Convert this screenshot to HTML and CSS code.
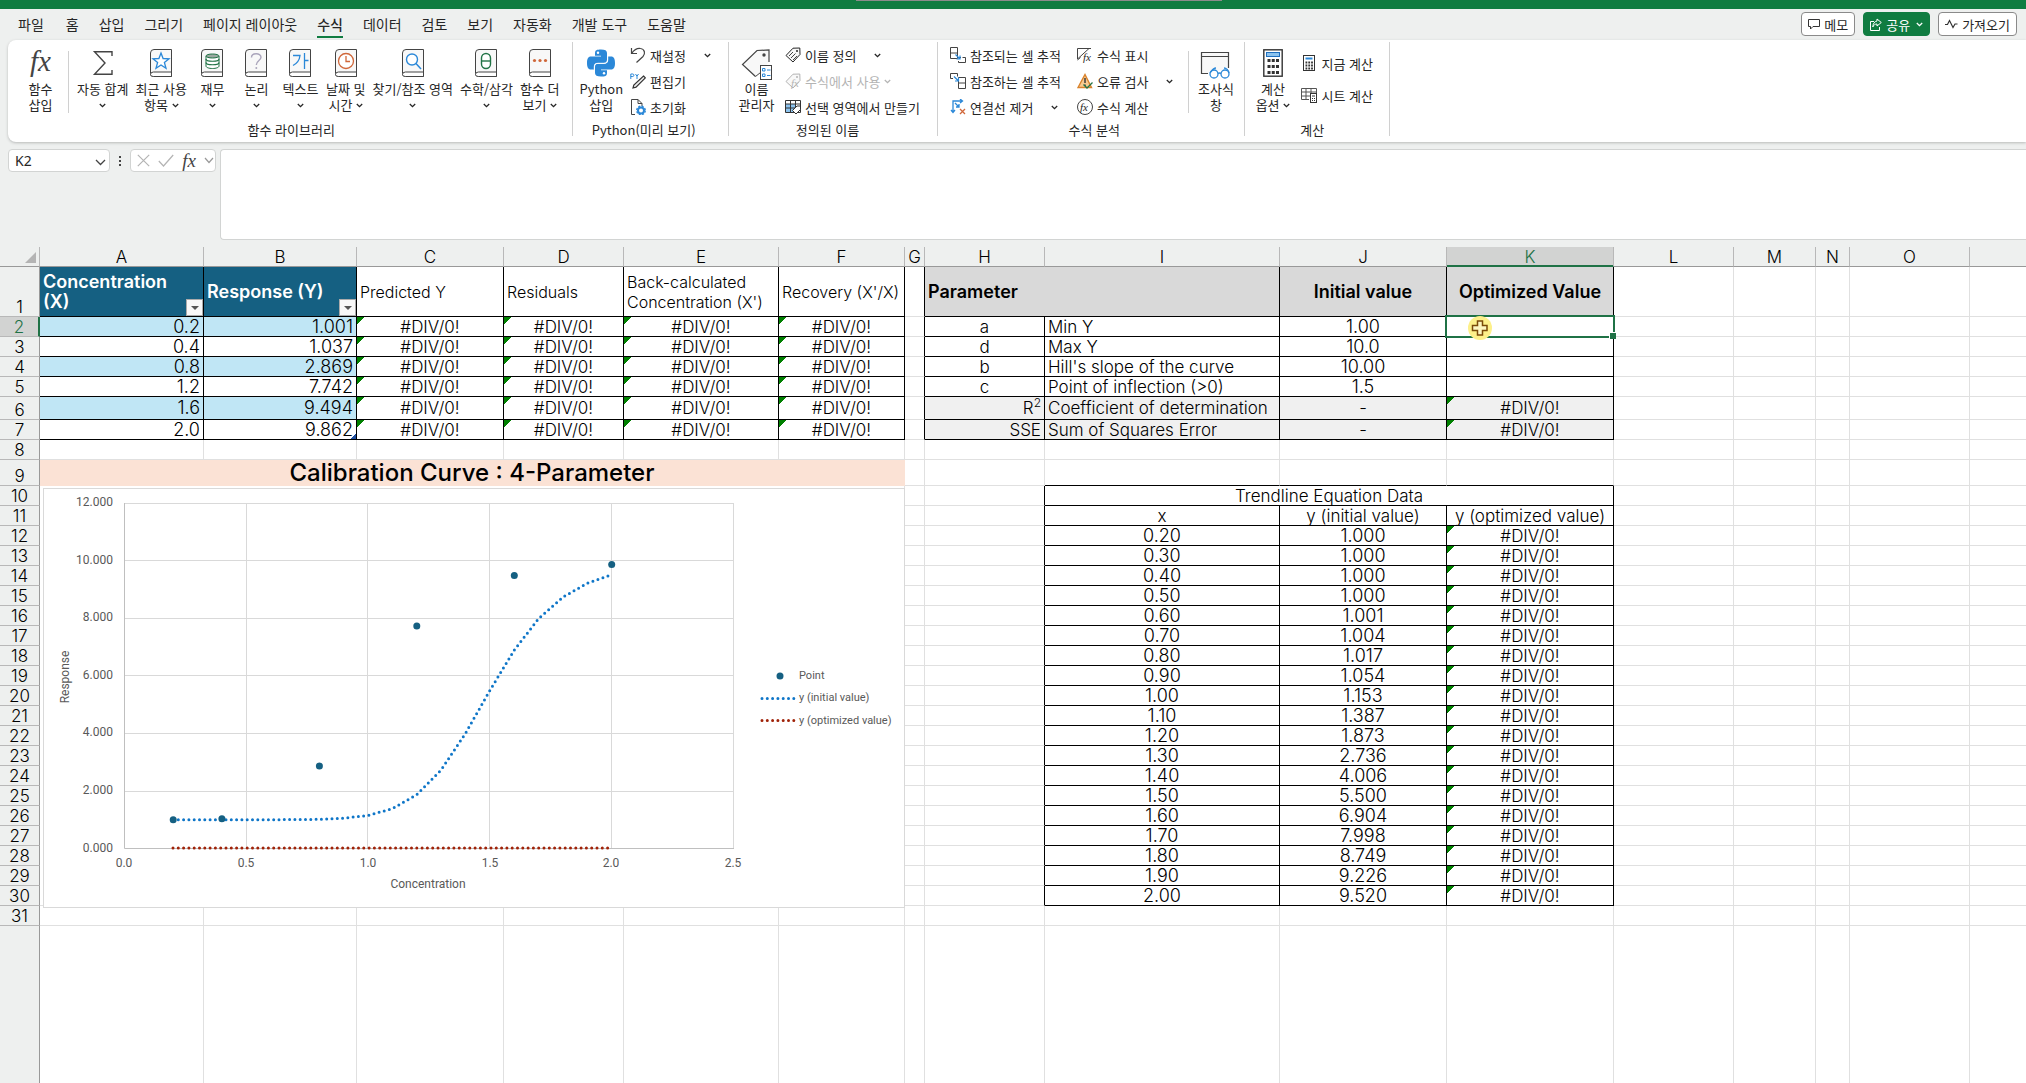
FILE: index.html
```html
<!DOCTYPE html>
<html lang="ko">
<head>
<meta charset="utf-8">
<title>Calibration Curve</title>
<link rel="stylesheet" href="styles.css">
</head>
<body>
<svg class="defs" aria-hidden="true">
  <symbol id="chev" viewBox="0 0 7 5"><path d="M.8 1l2.7 2.7L6.200 1" fill="none" stroke="currentColor" stroke-width="1.300"/></symbol>
  <symbol id="book" viewBox="0 0 22 28"><path d="M4 .5H21.500V27.500H3.500a3 3 0 0 1-3-3V4A3.500 3.500 0 0 1 4 .5z" fill="#f8f8f8" stroke="#444"/><path d="M.5 25.500a3 2.500 0 0 1 3-2.500H21.500V27.500H3.500a3 2 0 0 1-3-2z" fill="#fff" stroke="#444"/></symbol>
  <symbol id="tag" viewBox="0 0 16 16"><path d="M1 8.500L8 1.200 14.800 1 15 7.500 8 15z" fill="#f8f8f8" stroke="currentColor"/><circle cx="12" cy="4" r="1" fill="currentColor"/></symbol>
</svg>

<div class="titlebar"><div class="titlebar-handle"></div></div>

<header class="tabs">
  <nav class="tab-list">
    <a href="#">파일</a><a href="#" class="second">홈</a><a href="#">삽입</a><a href="#">그리기</a><a href="#">페이지 레이아웃</a><a href="#" class="active">수식</a><a href="#">데이터</a><a href="#">검토</a><a href="#">보기</a><a href="#">자동화</a><a href="#">개발 도구</a><a href="#">도움말</a>
  </nav>
  <div class="actions">
    <button type="button"><svg width="12" height="12" viewBox="0 0 12 12"><path d="M.5 1.500h11v7H5L2.500 11V8.500h-2z" fill="none" stroke="#333"/></svg>메모</button>
    <button type="button" class="share"><svg width="12" height="13" viewBox="0 0 12 13"><path d="M4 3.500H.5v9h9V9M7 1l4.300 3.500L7 8V6C5 6 3.500 7 2.800 9 3 5.500 4.500 3.500 7 3z" fill="none" stroke="#fff"/></svg>공유<svg class="chev" width="7" height="5"><use href="#chev"/></svg></button>
    <button type="button"><svg width="13" height="10" viewBox="0 0 13 10"><path d="M0 5.500h2.500L4.500 1.500 8 8.500 10 5h2.500" fill="none" stroke="#333" stroke-width="1.200"/></svg>가져오기</button>
  </div>
</header>

<section class="ribbon">
  <div class="group g-lib">
    <div class="body">
      <button type="button" class="big"><span class="ico fx">fx</span><span>함수<br>삽입</span></button>
      <i class="sep"></i>
      <button type="button" class="big"><span class="ico"><svg width="20" height="28" viewBox="0 0 20 28"><path d="M19 7V2.700H1.500L12 14 1.500 25.300H19V21" fill="none" stroke="#444" stroke-width="1.400"/></svg></span><span>자동 합계<br><svg class="chev" width="7" height="5"><use href="#chev"/></svg></span></button>
      <button type="button" class="big"><span class="ico"><svg width="22" height="28"><use href="#book"/><path d="M11 4l2.100 5.500 5.900.3-4.600 3.700 1.600 5.800-5-3.300-5 3.300 1.600-5.800L3 9.800l5.900-.3z" fill="#fff" stroke="#2b88d8" stroke-width="1.300"/></svg></span><span>최근 사용<br>항목 <svg class="chev" width="7" height="5"><use href="#chev"/></svg></span></button>
      <button type="button" class="big"><span class="ico"><svg width="22" height="28"><use href="#book"/><path d="M5 7v10c0 1.500 3 2.500 6.500 2.500S18 18.500 18 17V7" fill="#fff" stroke="#217346"/><ellipse cx="11.500" cy="7" rx="6.500" ry="2" fill="#9aa8a0" stroke="#217346"/><path d="M5 10c0 3 13 3 13 0M5 13.500c0 3 13 3 13 0" fill="none" stroke="#217346" stroke-width="1.200"/></svg></span><span>재무<br><svg class="chev" width="7" height="5"><use href="#chev"/></svg></span></button>
      <button type="button" class="big"><span class="ico"><svg width="22" height="28"><use href="#book"/><path d="M6.500 8.500c0-5 9.500-5 9.500-.3 0 3.300-4.700 3.300-4.700 7.800" fill="none" stroke="#aaa5bb" stroke-width="1.400"/><circle cx="11.300" cy="19" r="1" fill="#aaa5bb"/></svg></span><span>논리<br><svg class="chev" width="7" height="5"><use href="#chev"/></svg></span></button>
      <button type="button" class="big"><span class="ico"><svg width="22" height="28"><use href="#book"/><path d="M4 6.500h7C10.500 11 8 14.500 4 16.500M15.500 4v16M15.500 11.500h4" fill="none" stroke="#2b88d8" stroke-width="1.300"/></svg></span><span>텍스트<br><svg class="chev" width="7" height="5"><use href="#chev"/></svg></span></button>
      <button type="button" class="big"><span class="ico"><svg width="22" height="28"><use href="#book"/><circle cx="11" cy="12" r="7.500" fill="#fff" stroke="#d0673a" stroke-width="1.300"/><path d="M11 7v5.500h4" fill="none" stroke="#d0673a" stroke-width="1.300"/></svg></span><span>날짜 및<br>시간 <svg class="chev" width="7" height="5"><use href="#chev"/></svg></span></button>
      <button type="button" class="big"><span class="ico"><svg width="22" height="28"><use href="#book"/><circle cx="10" cy="10.500" r="5.500" fill="#fff" stroke="#2b88d8" stroke-width="1.400"/><path d="M14 14.500l5 5.500" stroke="#2b88d8" stroke-width="1.500"/></svg></span><span>찾기/참조 영역<br><svg class="chev" width="7" height="5"><use href="#chev"/></svg></span></button>
      <button type="button" class="big"><span class="ico"><svg width="22" height="28"><use href="#book"/><rect x="6.500" y="4.500" width="9" height="15" rx="4.500" fill="#fff" stroke="#217346" stroke-width="1.400"/><path d="M6.500 12h9" stroke="#217346" stroke-width="1.400"/></svg></span><span>수학/삼각<br><svg class="chev" width="7" height="5"><use href="#chev"/></svg></span></button>
      <button type="button" class="big"><span class="ico"><svg width="22" height="28"><use href="#book"/><g fill="#d0673a"><circle cx="5.500" cy="11.500" r="1.600"/><circle cx="11" cy="11.500" r="1.600"/><circle cx="16.500" cy="11.500" r="1.600"/></g></svg></span><span>함수 더<br>보기 <svg class="chev" width="7" height="5"><use href="#chev"/></svg></span></button>
    </div>
    <div class="label">함수 라이브러리</div>
  </div>

  <div class="group g-py">
    <div class="body">
      <button type="button" class="big"><span class="ico"><svg width="30" height="28" viewBox="0 0 30 28"><path d="M9 4C9 1 11 .5 15 .5S21 1.500 21 4v7c0 2-1 3-3 3h-6c-3 0-4 1.500-4 4v2.500H5C2 20.500 1 18 1 14s1-6.500 4-6.500h10V6.700H9z" fill="#2b88d8"/><path d="M21 24c0 3-2 3.500-6 3.500S9 26.500 9 24v-6c0-2 1-3.200 3-3.200h6c3 0 4.200-1.500 4.200-4V7.500H25c3 0 4 2.500 4 6.500s-1 6.500-4 6.500H15v.8h6z" fill="#2b88d8"/><path d="M8.300 20.500V18c0-2.500 1-3.700 3.700-3.700h6c2.500 0 3.500-1.500 3.500-3.300V7.500" fill="none" stroke="#fff" stroke-width="1"/><circle cx="12" cy="3.800" r="1.200" fill="#fff"/><circle cx="18" cy="24.200" r="1.200" fill="#fff"/></svg></span><span>Python<br>삽입</span></button>
      <div class="stack">
        <div class="line"><button type="button"><svg width="16" height="16"><path d="M1.500 1v5.500H7M1.700 6.300C4 3 7 1 10.500 1.500 15 2 15.500 7 13 9.500L6.500 15.500" fill="none" stroke="#444" stroke-width="1.200"/></svg>재설정</button><button type="button" class="drop" aria-label="재설정 옵션"><svg width="7" height="5"><use href="#chev"/></svg></button></div>
        <div class="line"><button type="button"><svg width="16" height="16"><path d="M.8 6V1h2c1.500 0 1.500 2.500 0 2.500h-2M5.500 1l1.500 2.200L8.500 1M7 3.200V6" fill="none" stroke="#2b88d8"/><path d="M13.500 3l1.800 1.800L6 14.200 3 15l.8-3z" fill="#eee" stroke="#333" stroke-width="1.200"/></svg>편집기</button></div>
        <div class="line"><button type="button"><svg width="16" height="16"><path d="M5 15.500H1.500V.5H8l4 4V7M8 .5v4h4" fill="none" stroke="#444"/><circle cx="11" cy="11.500" r="3" fill="#fff" stroke="#2b88d8" stroke-width="2"/><circle cx="11" cy="11.500" r="4.300" fill="none" stroke="#2b88d8" stroke-width="1.300" stroke-dasharray="2 1.400"/></svg>초기화</button></div>
      </div>
    </div>
    <div class="label">Python(미리 보기)</div>
  </div>

  <div class="group g-name">
    <div class="body">
      <button type="button" class="big"><span class="ico"><svg width="32" height="32" viewBox="0 0 32 32"><path d="M14.500 27.500L1.500 15.500 16 1.500 28 1V13" fill="#f8f8f8" stroke="#444" stroke-width="1.200"/><path d="M14.500 27.500l5-4" stroke="#444"/><circle cx="23" cy="6" r="1.700" fill="#444"/><rect x="19.500" y="16.500" width="11" height="14" fill="#fff" stroke="#444"/><path d="M21.500 19.500h2.500v2.500h-2.500zM21.500 25h2.500v2.500h-2.500z" fill="none" stroke="#2b88d8"/><path d="M26 21h3.500M26 26.500h3.500" stroke="#2b88d8"/></svg></span><span>이름<br>관리자</span></button>
      <div class="stack">
        <div class="line"><button type="button"><svg width="16" height="16"><use href="#tag"/><path d="M4 9l4-4M6 11l4.500-4.500M8 13l4-4" stroke="#444"/></svg>이름 정의</button><button type="button" class="drop" aria-label="이름 정의 옵션"><svg width="7" height="5"><use href="#chev"/></svg></button></div>
        <div class="line"><button type="button" class="off" disabled><svg width="16" height="16"><use href="#tag"/><text x="6" y="14" class="mini-fx">fx</text></svg>수식에서 사용 <svg width="7" height="5"><use href="#chev"/></svg></button></div>
        <div class="line"><button type="button"><svg width="16" height="16"><path d="M.5 1.500h15v12H.5z" fill="#fff"/><path d="M.5 5h10v8.500H.5z" fill="#8cc3ee"/><path d="M.5 1.500h15v12H.5zM.5 5h15M.5 9h10M5.500 1.500v12M10.500 1.500V9" fill="none" stroke="#333"/><path d="M7.500 11.500L12 7h3.500v3.500L11 15z" fill="#fff" stroke="#333"/></svg>선택 영역에서 만들기</button></div>
      </div>
    </div>
    <div class="label">정의된 이름</div>
  </div>

  <div class="group g-audit">
    <div class="body">
      <div class="stack">
        <div class="line"><button type="button"><svg width="16" height="16"><path d="M.5.500h7v11h-7zM.5 6h7M9 10.500h2M12.500 10.500h3v5h-7V14" fill="none" stroke="#444"/><path d="M5.500 7.500l4.500 4.500M10 8.500V12H6.500" fill="none" stroke="#2b88d8" stroke-width="1.200"/></svg>참조되는 셀 추적</button></div>
        <div class="line"><button type="button"><svg width="16" height="16"><path d="M3 5.500H.5v-5h7v3M8.500 4.500h7v11h-7zM8.500 10h7" fill="none" stroke="#444"/><path d="M4 3.500L8.500 8M8.500 4.500V8H5" fill="none" stroke="#2b88d8" stroke-width="1.200"/></svg>참조하는 셀 추적</button></div>
        <div class="line"><button type="button"><svg width="16" height="16"><path d="M3 13V2h9M10 0l2.500 2L10 4M1 11l2 2.500L5 11M5 4l4 4M9 5v3H6" fill="none" stroke="#2b88d8" stroke-width="1.300"/><path d="M10 10l5 5M15 10l-5 5" stroke="#d0673a" stroke-width="1.300"/></svg>연결선 제거</button><button type="button" class="drop" aria-label="연결선 제거 옵션"><svg width="7" height="5"><use href="#chev"/></svg></button></div>
      </div>
      <div class="stack second">
        <div class="line"><button type="button"><svg width="16" height="16"><path d="M14 1.500H.5V12L12 1.500M3.500 10.500L.5 13" fill="none" stroke="#444"/><text x="6" y="14" class="mini-fx">fx</text></svg>수식 표시</button></div>
        <div class="line"><button type="button"><svg width="16" height="16"><path d="M8 1.500L14.500 14.500H1z" fill="#f7c98f" stroke="#d9822b" stroke-width="1.400"/><path d="M8 5v5M8 11.500V13" stroke="#333" stroke-width="1.400"/><path d="M6.500 11.500l3.500 3.500 5.500-5.500" fill="none" stroke="#217346" stroke-width="1.300"/></svg>오류 검사</button><button type="button" class="drop" aria-label="오류 검사 옵션"><svg width="7" height="5"><use href="#chev"/></svg></button></div>
        <div class="line"><button type="button"><svg width="16" height="16"><circle cx="8" cy="8" r="7.500" fill="#fff" stroke="#444"/><text x="3" y="12" class="mini-fx">fx</text></svg>수식 계산</button></div>
      </div>
      <i class="sep"></i>
      <button type="button" class="big"><span class="ico"><svg width="31" height="28" viewBox="0 0 31 28"><path d="M8 24.500H1.500V3.500H28.500V19" fill="#f8f8f8" stroke="#444" stroke-width="1.200"/><path d="M1.500 7.500h27" stroke="#444"/><g fill="#fff" stroke="#2b88d8" stroke-width="1.300"><circle cx="14" cy="25" r="4"/><circle cx="25" cy="25" r="4"/><path d="M18 24.500q1.500-1 3 0M10 24c2-3 4-5 6-5M29 24c0-3-3-5-5-5" fill="none"/></g></svg></span><span>조사식<br>창</span></button>
    </div>
    <div class="label">수식 분석</div>
  </div>

  <div class="group g-calc">
    <div class="body">
      <button type="button" class="big"><span class="ico"><svg width="20" height="28" viewBox="0 0 20 28"><rect x=".8" y=".8" width="18.400" height="26.400" fill="#fff" stroke="#333" stroke-width="1.400"/><rect x="3.500" y="3.500" width="13" height="4" fill="#8cc3ee" stroke="#1f6fbf"/><path d="M4.500 11.500h11.500M4.500 17.500h11.500M4.500 23.500h11.500" stroke="#333" stroke-width="3" stroke-dasharray="3 1.250"/></svg></span><span>계산<br>옵션 <svg class="chev" width="7" height="5"><use href="#chev"/></svg></span></button>
      <div class="stack pair">
        <div class="line"><button type="button"><svg width="16" height="16"><rect x="2.500" y=".5" width="11" height="15" fill="#fff" stroke="#333"/><path d="M4.500 3.500h7" stroke="#2b88d8" stroke-width="2"/><path d="M4.500 7.500h7.500M4.500 10.500h7.500M4.500 13.500h7.500" stroke="#333" stroke-width="1.800" stroke-dasharray="1.800 1"/></svg>지금 계산</button></div>
        <div class="line"><button type="button"><svg width="16" height="16"><path d="M8 12.500H.5v-11h15V6M.5 5h15M.5 9H9M5 1.500v11M10 1.500V6" fill="none" stroke="#555"/><rect x="9.500" y="6.500" width="6" height="9" fill="#fff" stroke="#333"/><path d="M11 9h3" stroke="#333"/><path d="M11 11.500h3M11 13.500h3" stroke="#333" stroke-dasharray="1 1"/></svg>시트 계산</button></div>
      </div>
    </div>
    <div class="label">계산</div>
  </div>
</section>

<section class="formula-bar">
  <div class="name-box"><input type="text" value="K2" aria-label="이름 상자"><button type="button" aria-label="이름 목록"><svg width="11" height="7" viewBox="0 0 11 7"><path d="M1 1l4.500 4.500L10 1" fill="none" stroke="#444" stroke-width="1.300"/></svg></button></div>
  <svg class="dots" width="4" height="12" viewBox="0 0 4 12"><path d="M1 1h2v2H1zM1 5h2v2H1zM1 9h2v2H1z" fill="#444"/></svg>
  <div class="fx-box">
    <button type="button" aria-label="취소"><svg width="13" height="13"><path d="M.8.800l11.400 11.400M12.200.800L.8 12.200" stroke="#b4b4b4" stroke-width="1.200"/></svg></button>
    <button type="button" aria-label="입력"><svg width="16" height="13"><path d="M.8 7l4.700 5L15.200 1" fill="none" stroke="#b4b4b4" stroke-width="1.200"/></svg></button>
    <button type="button" class="fx">fx</button>
    <button type="button" aria-label="함수 목록"><svg width="10" height="7" viewBox="0 0 10 7"><path d="M1 1l4 4.500L9 1" fill="none" stroke="#999" stroke-width="1.200"/></svg></button>
  </div>
  <textarea class="formula" aria-label="수식 입력줄"></textarea>
</section>

<main class="sheet">
<table>
<colgroup><col class="c-head"><col class="c-a"><col class="c-b"><col class="c-c"><col class="c-d"><col class="c-e"><col class="c-f"><col class="c-g"><col class="c-h"><col class="c-i"><col class="c-j"><col class="c-k"><col class="c-l"><col class="c-m"><col class="c-n"><col class="c-o"><col></colgroup>
<thead><tr><th class="corner"><svg width="11" height="11"><path d="M11 0v11H0z" fill="#b4b4b4"/></svg><th>A<th>B<th>C<th>D<th>E<th>F<th>G<th>H<th>I<th>J<th class="on">K<th>L<th>M<th>N<th>O<th></tr></thead>
<tbody>
<tr class="r1"><th>1<td class="b head">Concentration<br>(X)<button type="button" class="filter" aria-label="Concentration 필터"></button><td class="b head">Response (Y)<button type="button" class="filter" aria-label="Response 필터"></button><td class="b">Predicted Y<td class="b">Residuals<td class="b">Back-calculated<br>Concentration (X')<td class="b">Recovery (X'/X)<td class="rb"><td class="b title" colspan="2">Parameter<td class="b title c">Initial value<td class="b title c">Optimized Value<td><td><td><td><td></tr>
<tr><th class="on">2<td class="b r band">0.2<td class="b r band">1.001<td class="b c err">#DIV/0!<td class="b c err">#DIV/0!<td class="b c err">#DIV/0!<td class="b c err">#DIV/0!<td class="rb"><td class="b c">a<td class="b">Min Y<td class="b c n">1.00<td class="b active"><span class="selection"></span><svg class="cursor" width="24" height="24" viewBox="0 0 24 24"><circle cx="12" cy="12" r="12" fill="#fdf08a"/><path d="M9.500 5h5v4.500H19v5h-4.500V19h-5v-4.500H4.500v-5h5z" fill="#fdf6c0" stroke="#7a4a08" stroke-width="1.500"/></svg><td><td><td><td><td></tr>
<tr><th>3<td class="b r">0.4<td class="b r">1.037<td class="b c err">#DIV/0!<td class="b c err">#DIV/0!<td class="b c err">#DIV/0!<td class="b c err">#DIV/0!<td class="rb"><td class="b c">d<td class="b">Max Y<td class="b c n">10.0<td class="b"><td><td><td><td><td></tr>
<tr><th>4<td class="b r band">0.8<td class="b r band">2.869<td class="b c err">#DIV/0!<td class="b c err">#DIV/0!<td class="b c err">#DIV/0!<td class="b c err">#DIV/0!<td class="rb"><td class="b c">b<td class="b">Hill's slope of the curve<td class="b c n">10.00<td class="b"><td><td><td><td><td></tr>
<tr><th>5<td class="b r">1.2<td class="b r">7.742<td class="b c err">#DIV/0!<td class="b c err">#DIV/0!<td class="b c err">#DIV/0!<td class="b c err">#DIV/0!<td class="rb"><td class="b c">c<td class="b">Point of inflection (&gt;0)<td class="b c n">1.5<td class="b"><td><td><td><td><td></tr>
<tr class="r6"><th>6<td class="b r band">1.6<td class="b r band">9.494<td class="b c err">#DIV/0!<td class="b c err">#DIV/0!<td class="b c err">#DIV/0!<td class="b c err">#DIV/0!<td class="rb"><td class="b r soft">R<sup>2</sup><td class="b soft">Coefficient of determination<td class="b c soft">-<td class="b c soft err">#DIV/0!<td><td><td><td><td></tr>
<tr><th>7<td class="b r">2.0<td class="b r table-end">9.862<td class="b c err">#DIV/0!<td class="b c err">#DIV/0!<td class="b c err">#DIV/0!<td class="b c err">#DIV/0!<td class="rb"><td class="b r soft">SSE<td class="b soft">Sum of Squares Error<td class="b c soft">-<td class="b c soft err">#DIV/0!<td><td><td><td><td></tr>
<tr><th>8<td><td><td><td><td><td><td><td><td><td><td><td><td><td><td><td></tr>
<tr class="r9"><th>9<td colspan="6" class="chart-title">Calibration Curve : 4-Parameter<td><td><td class="bb"><td class="bb"><td class="bb"><td><td><td><td><td></tr>
<tr><th>10<td colspan="6" rowspan="21" class="chart-cell">
<figure class="chart">
<svg viewBox="44 488 859 418" width="859" height="418" role="img" aria-label="Calibration Curve">
  <path d="M124 502.500H733.500M124 559.500H733.500M124 617.500H733.500M124 674.500H733.500M124 732.500H733.500M124 790.500H733.500M246.500 502V847M367.500 502V847M489.500 502V847M611.500 502V847M733.500 502V847" fill="none" stroke="#d9d9d9"/>
  <path d="M124.500 502V847.500H734" fill="none" stroke="#bfbfbf"/>
  <path d="M173 818.700H246L295 818.600 319.400 818.300 343.700 817.200 368.100 814.400 392.500 807.600 416.800 793.700 441.200 768.800 465.500 732.300 489.900 689.400 514.300 649 538.600 617.600 563 596 587.300 582.300 611.700 573.800" class="series blue"/>
  <path d="M173 847H612" class="series red"/>
  <g fill="#156082"><circle cx="173.200" cy="818.700" r="3.500"/><circle cx="221.900" cy="817.700" r="3.500"/><circle cx="319.400" cy="765" r="3.500"/><circle cx="416.800" cy="624.900" r="3.500"/><circle cx="514.300" cy="574.500" r="3.500"/><circle cx="611.700" cy="563.500" r="3.500"/><circle cx="780" cy="675" r="3.500"/></g>
  <path d="M762 697.500H796" class="series blue"/>
  <path d="M762 719.500H796" class="series red"/>
  <g text-anchor="end"><text x="113" y="505">12.000</text><text x="113" y="563">10.000</text><text x="113" y="620">8.000</text><text x="113" y="678">6.000</text><text x="113" y="735">4.000</text><text x="113" y="793">2.000</text><text x="113" y="851">0.000</text></g>
  <g text-anchor="middle"><text x="124" y="866">0.0</text><text x="246" y="866">0.5</text><text x="368" y="866">1.0</text><text x="490" y="866">1.5</text><text x="611" y="866">2.0</text><text x="733" y="866">2.5</text>
  <text x="428" y="887" class="axis">Concentration</text><text x="0" y="0" class="axis" transform="translate(69 676) rotate(-90)">Response</text></g>
  <g class="legend"><text x="799" y="678">Point</text><text x="799" y="700">y (initial value)</text><text x="799" y="723">y (optimized value)</text></g>
</svg>
</figure>
<td><td class="rb"><td colspan="3" class="b c">Trendline Equation Data<td><td><td><td><td></tr>
<tr><th>11<td><td class="rb"><td class="b c">x<td class="b c">y (initial value)<td class="b c">y (optimized value)<td><td><td><td><td></tr>
<tr><th>12<td><td class="rb"><td class="b c n">0.20<td class="b c n">1.000<td class="b c err">#DIV/0!<td><td><td><td><td></tr>
<tr><th>13<td><td class="rb"><td class="b c n">0.30<td class="b c n">1.000<td class="b c err">#DIV/0!<td><td><td><td><td></tr>
<tr><th>14<td><td class="rb"><td class="b c n">0.40<td class="b c n">1.000<td class="b c err">#DIV/0!<td><td><td><td><td></tr>
<tr><th>15<td><td class="rb"><td class="b c n">0.50<td class="b c n">1.000<td class="b c err">#DIV/0!<td><td><td><td><td></tr>
<tr><th>16<td><td class="rb"><td class="b c n">0.60<td class="b c n">1.001<td class="b c err">#DIV/0!<td><td><td><td><td></tr>
<tr><th>17<td><td class="rb"><td class="b c n">0.70<td class="b c n">1.004<td class="b c err">#DIV/0!<td><td><td><td><td></tr>
<tr><th>18<td><td class="rb"><td class="b c n">0.80<td class="b c n">1.017<td class="b c err">#DIV/0!<td><td><td><td><td></tr>
<tr><th>19<td><td class="rb"><td class="b c n">0.90<td class="b c n">1.054<td class="b c err">#DIV/0!<td><td><td><td><td></tr>
<tr><th>20<td><td class="rb"><td class="b c n">1.00<td class="b c n">1.153<td class="b c err">#DIV/0!<td><td><td><td><td></tr>
<tr><th>21<td><td class="rb"><td class="b c n">1.10<td class="b c n">1.387<td class="b c err">#DIV/0!<td><td><td><td><td></tr>
<tr><th>22<td><td class="rb"><td class="b c n">1.20<td class="b c n">1.873<td class="b c err">#DIV/0!<td><td><td><td><td></tr>
<tr><th>23<td><td class="rb"><td class="b c n">1.30<td class="b c n">2.736<td class="b c err">#DIV/0!<td><td><td><td><td></tr>
<tr><th>24<td><td class="rb"><td class="b c n">1.40<td class="b c n">4.006<td class="b c err">#DIV/0!<td><td><td><td><td></tr>
<tr><th>25<td><td class="rb"><td class="b c n">1.50<td class="b c n">5.500<td class="b c err">#DIV/0!<td><td><td><td><td></tr>
<tr><th>26<td><td class="rb"><td class="b c n">1.60<td class="b c n">6.904<td class="b c err">#DIV/0!<td><td><td><td><td></tr>
<tr><th>27<td><td class="rb"><td class="b c n">1.70<td class="b c n">7.998<td class="b c err">#DIV/0!<td><td><td><td><td></tr>
<tr><th>28<td><td class="rb"><td class="b c n">1.80<td class="b c n">8.749<td class="b c err">#DIV/0!<td><td><td><td><td></tr>
<tr><th>29<td><td class="rb"><td class="b c n">1.90<td class="b c n">9.226<td class="b c err">#DIV/0!<td><td><td><td><td></tr>
<tr><th>30<td><td class="rb"><td class="b c n">2.00<td class="b c n">9.520<td class="b c err">#DIV/0!<td><td><td><td><td></tr>
<tr><th>31<td><td><td><td><td><td><td><td><td><td><td><td><td><td><td><td></tr>
<tr class="rest"><th><td><td><td><td><td><td><td><td><td><td><td><td><td><td><td><td></tr>
</tbody>
</table>
</main>
</body>
</html>
```
FILE: styles.css
```css
* { box-sizing: border-box; }

body {
  margin: 0;
  min-height: 100vh;
  display: flex;
  flex-direction: column;
  background: #eef0ef;
  color: #262626;
  font-family: "Noto Sans CJK KR", sans-serif;
  font-size: 13px;
  overflow-x: hidden;
}

.defs { display: none; }

button {
  margin: 0;
  padding: 0;
  border: 0;
  background: none;
  color: inherit;
  font: inherit;
  white-space: nowrap;
}

/* Title bar and tabs */
.titlebar {
  height: 9px;
  background: #107c41;
}
.titlebar-handle {
  width: 366px;
  height: 1px;
  margin: 0 auto 0 856px;
  background: #8c8c8c;
}

.tabs {
  height: 30px;
  display: flex;
  justify-content: space-between;
  align-items: center;
  padding: 0 9px 0 18px;
}
.tab-list {
  display: flex;
  gap: 20px;
  height: 28px;
  font-size: 14px;
  line-height: 28px;
  white-space: nowrap;
}
.tab-list a {
  color: #262626;
  text-decoration: none;
}
.tab-list .second { margin-left: 2px; }
.tab-list .active {
  font-weight: 500;
  border-bottom: 2px solid #107c41;
}

.actions { display: flex; gap: 8px; }
.actions button {
  height: 24px;
  display: flex;
  align-items: center;
  gap: 4px;
  padding: 0 6px;
  border: 1px solid #8a8a8a;
  border-radius: 4px;
  background: #fff;
}
.actions .share {
  border-color: #107c41;
  background: #107c41;
  color: #fff;
}
.actions .share .chev { margin-left: 2px; }

/* Ribbon */
.ribbon {
  display: flex;
  height: 102px;
  margin-left: 8px;
  margin-top: 1px;
  padding-top: 2px;
  border-radius: 8px 0 0 8px;
  background: #fff;
  box-shadow: 0 1px 3px #b8bab9;
}
.group {
  display: flex;
  flex-direction: column;
  border-right: 1px solid #d0d0d0;
  height: 94px;
}
.body {
  display: flex;
  flex: none;
  height: 78px;
}
.label {
  flex: none;
  text-align: center;
  line-height: 20px;
}
.sep {
  width: 1px;
  height: 62px;
  margin: 9px 5px 0;
  background: #d0d0d0;
}
.big {
  min-width: 44px;
  display: flex;
  flex-direction: column;
  align-items: center;
  gap: 4px;
  padding: 7px 4px 0 3px;
  line-height: 16px;
}
.big .ico {
  height: 28px;
  display: block;
}
.big .ico svg {
  display: block;
  overflow: visible;
}
.big .chev { vertical-align: 2px; }
.fx {
  font-family: "Liberation Serif", serif;
  font-style: italic;
  color: #444;
}
.ico.fx {
  font-size: 29px;
  line-height: 24px;
}
.mini-fx {
  font: italic 11px "Liberation Serif", serif;
  fill: currentColor;
}
.stack {
  display: flex;
  flex-direction: column;
}
.line {
  display: flex;
  align-items: center;
  gap: 18px;
  height: 26px;
}
.line button {
  display: flex;
  align-items: center;
  gap: 4px;
}
.line .off { color: #b4b4b4; }
.stack.second { margin-left: 16px; }
.stack.pair {
  justify-content: center;
  padding-bottom: 4px;
}
.pair .line { height: 32px; }

.g-lib { padding: 0 8px 0 11px; }
.g-py { padding: 0 17px 0 4px; }
.g-py .stack { margin-left: 3px; }
.g-name { padding: 0 17px 0 6px; }
.g-name .stack { margin-left: 6px; }
.g-audit { padding: 0 6px 0 12px; }
.g-audit .sep { margin-left: 15px; }
.g-calc { padding: 0 16px 0 6px; }
.g-calc .stack { margin-left: 6px; }

/* Formula bar */
.formula-bar {
  display: flex;
  align-items: flex-start;
  height: 105px;
  padding: 7px 0 0 8px;
}
.name-box,
.fx-box {
  height: 23px;
  display: flex;
  align-items: center;
  border: 1px solid #d2d4d3;
  border-radius: 4px;
  background: #fff;
}
.name-box {
  width: 102px;
  padding: 0 6px;
}
.name-box input {
  width: 80px;
  border: 0;
  padding: 0;
  background: none;
  color: #262626;
  font: 14px "Noto Sans", sans-serif;
}
.dots { margin: 6px 8px 0 8px; }
.fx-box {
  width: 86px;
  padding: 0 1px 0 6px;
  justify-content: space-between;
}
.fx-box button {
  display: flex;
}
.fx-box .fx {
  font-family: "Liberation Serif", serif;
  font-size: 19px;
  line-height: 18px;
}
.formula {
  flex: 1;
  height: 91px;
  margin-left: 4px;
  border: 1px solid #d2d4d3;
  border-right: 0;
  border-radius: 4px 0 0 4px;
  background: #fff;
  resize: none;
}

/* Sheet */
.sheet {
  flex: 1;
  display: flex;
  background: #fff;
}
table {
  width: 100%;
  table-layout: fixed;
  border-collapse: separate;
  border-spacing: 0;
  font-family: Inter, sans-serif;
  font-size: 17px;
  font-weight: 300;
  color: #000;
}
.c-head { width: 40px; }
.c-a { width: 164px; }
.c-b { width: 153px; }
.c-c { width: 147px; }
.c-d { width: 120px; }
.c-e { width: 155px; }
.c-f { width: 126px; }
.c-g { width: 20px; }
.c-h { width: 120px; }
.c-i { width: 235px; }
.c-j, .c-k { width: 167px; }
.c-l, .c-o { width: 120px; }
.c-m { width: 82px; }
.c-n { width: 34px; }

tr { height: 20px; }
th, td {
  padding: 0;
  line-height: 18px;
  white-space: nowrap;
  border-right: 1px solid #e0e0e0;
  border-bottom: 1px solid #e0e0e0;
}
td {
  position: relative;
  padding: 0 3px;
  background: #fff;
}
th {
  font-weight: 300;
  background: #eef0ef;
  border-color: #b8b8b8;
  vertical-align: bottom;
}
thead th { border-bottom-color: #999; }
tbody th { border-right-color: #999; }
th:last-child, td:last-child { border-right: 0; }
tbody tr.rest th { border-right: 1px solid #999; }
.corner svg {
  display: block;
  margin: 0 3px 3px auto;
}
th.on {
  background: #d2d3d2;
  color: #1f7246;
}
thead th.on { box-shadow: inset 0 -1px #1f7246; border-bottom-color: #1f7246; }
tbody th.on { border-right: 2px solid #1f7246; }

.r1 { height: 50px; }
.r1 td {
  font-size: 16px;
  line-height: 20px;
}
.r6 { height: 23px; }
.r9 { height: 26px; }
.rest { height: auto; }
.rest td, .rest th { border-bottom: 0; }

.b { border-color: #000; }
.rb { border-right-color: #000; }
.bb { border-bottom-color: #000; }
.c { text-align: center; }
.r { text-align: right; }
.n, .r { font-size: 18px; }
.soft.r { font-size: 17px; }
.r1 .head {
  background: #156082;
  color: #fff;
  font-size: 18px;
  font-weight: 600;
}
.band { background: #c0e6f5; }
.r1 .title {
  background: #d9d9d9;
  font-size: 18px;
  font-weight: 600;
}
.soft { background-color: #f0f0f0; }
.err { background-image: linear-gradient(135deg, #008000 0 5px, transparent 5px); }
.table-end { background-image: linear-gradient(315deg, #1f4fa0 0 4px, transparent 4px); }
sup {
  font-size: 12px;
  line-height: 0;
}

.filter {
  position: absolute;
  right: 0;
  bottom: 0;
  width: 17px;
  height: 17px;
  border: 1px solid #ababab;
  background: #f8f8f8;
}
.filter::before {
  content: "";
  display: block;
  width: 0;
  margin: 1px auto 0;
  border: 4px solid transparent;
  border-top: 4px solid #555;
  border-bottom: 0;
}

.selection {
  position: absolute;
  z-index: 1;
  inset: -2px -2px -2px -2px;
  border: 2px solid #1f7246;
}
.selection::after {
  content: "";
  position: absolute;
  right: -3px;
  bottom: -3px;
  width: 6px;
  height: 6px;
  border: solid #fff;
  border-width: 1px 0 0 1px;
  background: #1f7246;
}
.cursor {
  position: absolute;
  z-index: 2;
  left: 21px;
  top: -1px;
}

.chart-title {
  background: #fbe2d5;
  border-color: #fbe2d5;
  text-align: center;
  font-size: 24px;
  line-height: 24px;
  font-weight: 500;
}
.chart-cell { padding: 0; }
.chart {
  position: absolute;
  z-index: 1;
  inset: 2px -1px -3px 3px;
  margin: 0;
  border: 1px solid #d9d9d9;
  background: #fff;
}
.chart svg { display: block; }
.chart text {
  font-family: Roboto, sans-serif;
  font-size: 12px;
  font-weight: 400;
  fill: #595959;
}
.chart .legend text { font-size: 11px; }
.series {
  fill: none;
  stroke-width: 3;
  stroke-linecap: round;
  stroke-dasharray: 0 5.300;
}
.blue { stroke: #0f76c8; }
.red { stroke: #a02208; }
```
